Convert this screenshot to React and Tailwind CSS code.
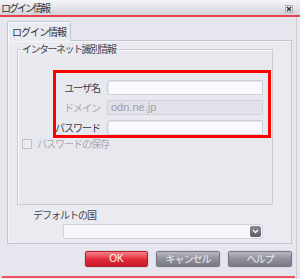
const jp = { fontFamily: '"Noto Sans CJK JP", "Noto Sans", sans-serif' };
const latin = { fontFamily: '"Liberation Sans", Arial, sans-serif' };

const Field = ({ label, value, disabled }) => (
  <>
    <span
      className={`h-[15px] flex items-center justify-end whitespace-nowrap text-[10px] tracking-[-1px] leading-none ${
        disabled ? "text-[#a8a8b0]" : "text-[#3a3a42]"
      }`}
      style={jp}
    >
      {label}
    </span>
    <div
      className={`h-[15px] rounded-[2px] border border-[#d0d0dc] flex items-center pl-[3px] text-[11px] leading-none text-[#a0a0a8] ${
        disabled ? "bg-[#e2e2ea]" : "bg-[#f8f8fd] shadow-[inset_1px_1px_0_#e4e4ee]"
      }`}
      style={latin}
    >
      {value}
    </div>
  </>
);

const App = () => {
  return (
    <div className="w-[300px] h-[279px] bg-[#e6e6ee] flex flex-col overflow-hidden" style={jp}>
      {/* TITLE BAR */}
      <div className="h-[15px] flex items-center justify-between pl-[1px] pr-[7px] bg-gradient-to-b from-[#f6f6f9] to-[#d2d2da]">
        <span className="text-[10px] tracking-[-2px] leading-none text-[#34343c]">ログイン情報</span>
        <div className="w-[8px] h-[8px] mt-[2px] bg-[#e8e8ee] border border-[#b0b0b8] flex items-center justify-center">
          <svg width="6" height="6" viewBox="0 0 6 6">
            <path d="M1 1L5 5M5 1L1 5" stroke="#303038" strokeWidth="1.4" />
          </svg>
        </div>
      </div>
      <div className="h-[2px] bg-[#e8404c]" />

      {/* BODY */}
      <div className="w-[297px] flex-1 flex flex-col border-r border-[#cacad6]">
        <div className="pl-[7px] pr-[4px] pt-[4px]">
          {/* TAB */}
          <div className="relative z-10 w-[64px] h-[20px] -mb-px rounded-t-[2px] border border-b-0 border-[#c4c4d2] bg-[#eaeaf1] shadow-[inset_1px_1px_0_#ffffff] flex items-center justify-center">
            <span className="text-[10px] tracking-[-1px] leading-none text-[#34343c]">ログイン情報</span>
          </div>

          {/* PANEL */}
          <div className="h-[204px] border border-[#c4c4d2] shadow-[inset_1px_1px_0_#f6f6fa] bg-[#eaeaf1] flex flex-col pl-[9px] pt-[8px]">
            {/* GROUP BOX */}
            <div className="relative w-[256px] h-[156px] border border-[#cacad8] shadow-[inset_1px_1px_0_#fafafd] bg-[#e8e8ef]">
              <span className="absolute -top-[7px] left-[3px] px-[1px] bg-[#eaeaf1] text-[10px] tracking-[-1.5px] leading-[12px] text-[#44444c]">
                インターネット識別情報
              </span>

              <div className="ml-[35px] mt-[20px] w-[218px] h-[68px] border-[3px] border-[#ff0000] grid grid-cols-[44px_1fr] gap-x-[7px] gap-y-[5px] content-start pt-[7px] pr-[5px]">
                <Field label="ユーザ名" value="" />
                <Field label="ドメイン" value="odn.ne.jp" disabled />
                <Field label="パスワード" value="" />
              </div>

              <div className="ml-[4px] mt-[1px] flex items-center gap-[5px]">
                <div className="w-[10px] h-[10px] border border-[#c0c0ce] bg-[#ececf2]" />
                <span className="text-[10px] tracking-[-1px] leading-none text-[#a8a8b0]">パスワードの保存</span>
              </div>
            </div>

            {/* DEFAULT COUNTRY */}
            <span className="ml-[16px] mt-[3px] h-[13px] text-[10px] tracking-[-1px] leading-[13px] text-[#44444c]">
              デフォルトの国
            </span>
            <div className="ml-[46px] mt-[3px] w-[200px] h-[15px] rounded-[2px] border border-[#d0d0dc] bg-[#f6f6fb] flex items-center justify-end pr-[1px]">
              <div className="w-[11px] h-[11px] rounded-[2px] bg-gradient-to-b from-[#8a8a94] to-[#5e5e68] flex items-center justify-center">
                <svg width="7" height="5" viewBox="0 0 7 5">
                  <path d="M1 1L3.5 3.5L6 1" stroke="#ffffff" strokeWidth="1.3" fill="none" />
                </svg>
              </div>
            </div>
          </div>
        </div>

        {/* BUTTONS */}
        <div className="mt-[7px] flex justify-end gap-[8px] pr-[4px]">
          <button
            className="w-[63px] h-[16px] rounded-[2px] border border-[#b02030] bg-gradient-to-b from-[#f47c88] via-[#e42c3c] to-[#c81828] ring-1 ring-[#d8d8e2] text-white text-[10px] leading-none"
            style={latin}
          >
            OK
          </button>
          <button className="w-[64px] h-[16px] rounded-[2px] border border-[#78788a] bg-gradient-to-b from-[#b8b8c0] via-[#90909a] to-[#7a7a84] ring-1 ring-[#d8d8e2] text-[#ececf2] text-[10px] tracking-[-1px] leading-none">
            キャンセル
          </button>
          <button className="w-[64px] h-[16px] rounded-[2px] border border-[#78788a] bg-gradient-to-b from-[#b8b8c0] via-[#90909a] to-[#7a7a84] ring-1 ring-[#d8d8e2] text-[#ececf2] text-[10px] tracking-[-1px] leading-none">
            ヘルプ
          </button>
        </div>

        <div className="mt-[9px] ml-[2px] mr-[1px] h-[2px] bg-[#ec5464]" />
      </div>
    </div>
  );
};

export default App;
